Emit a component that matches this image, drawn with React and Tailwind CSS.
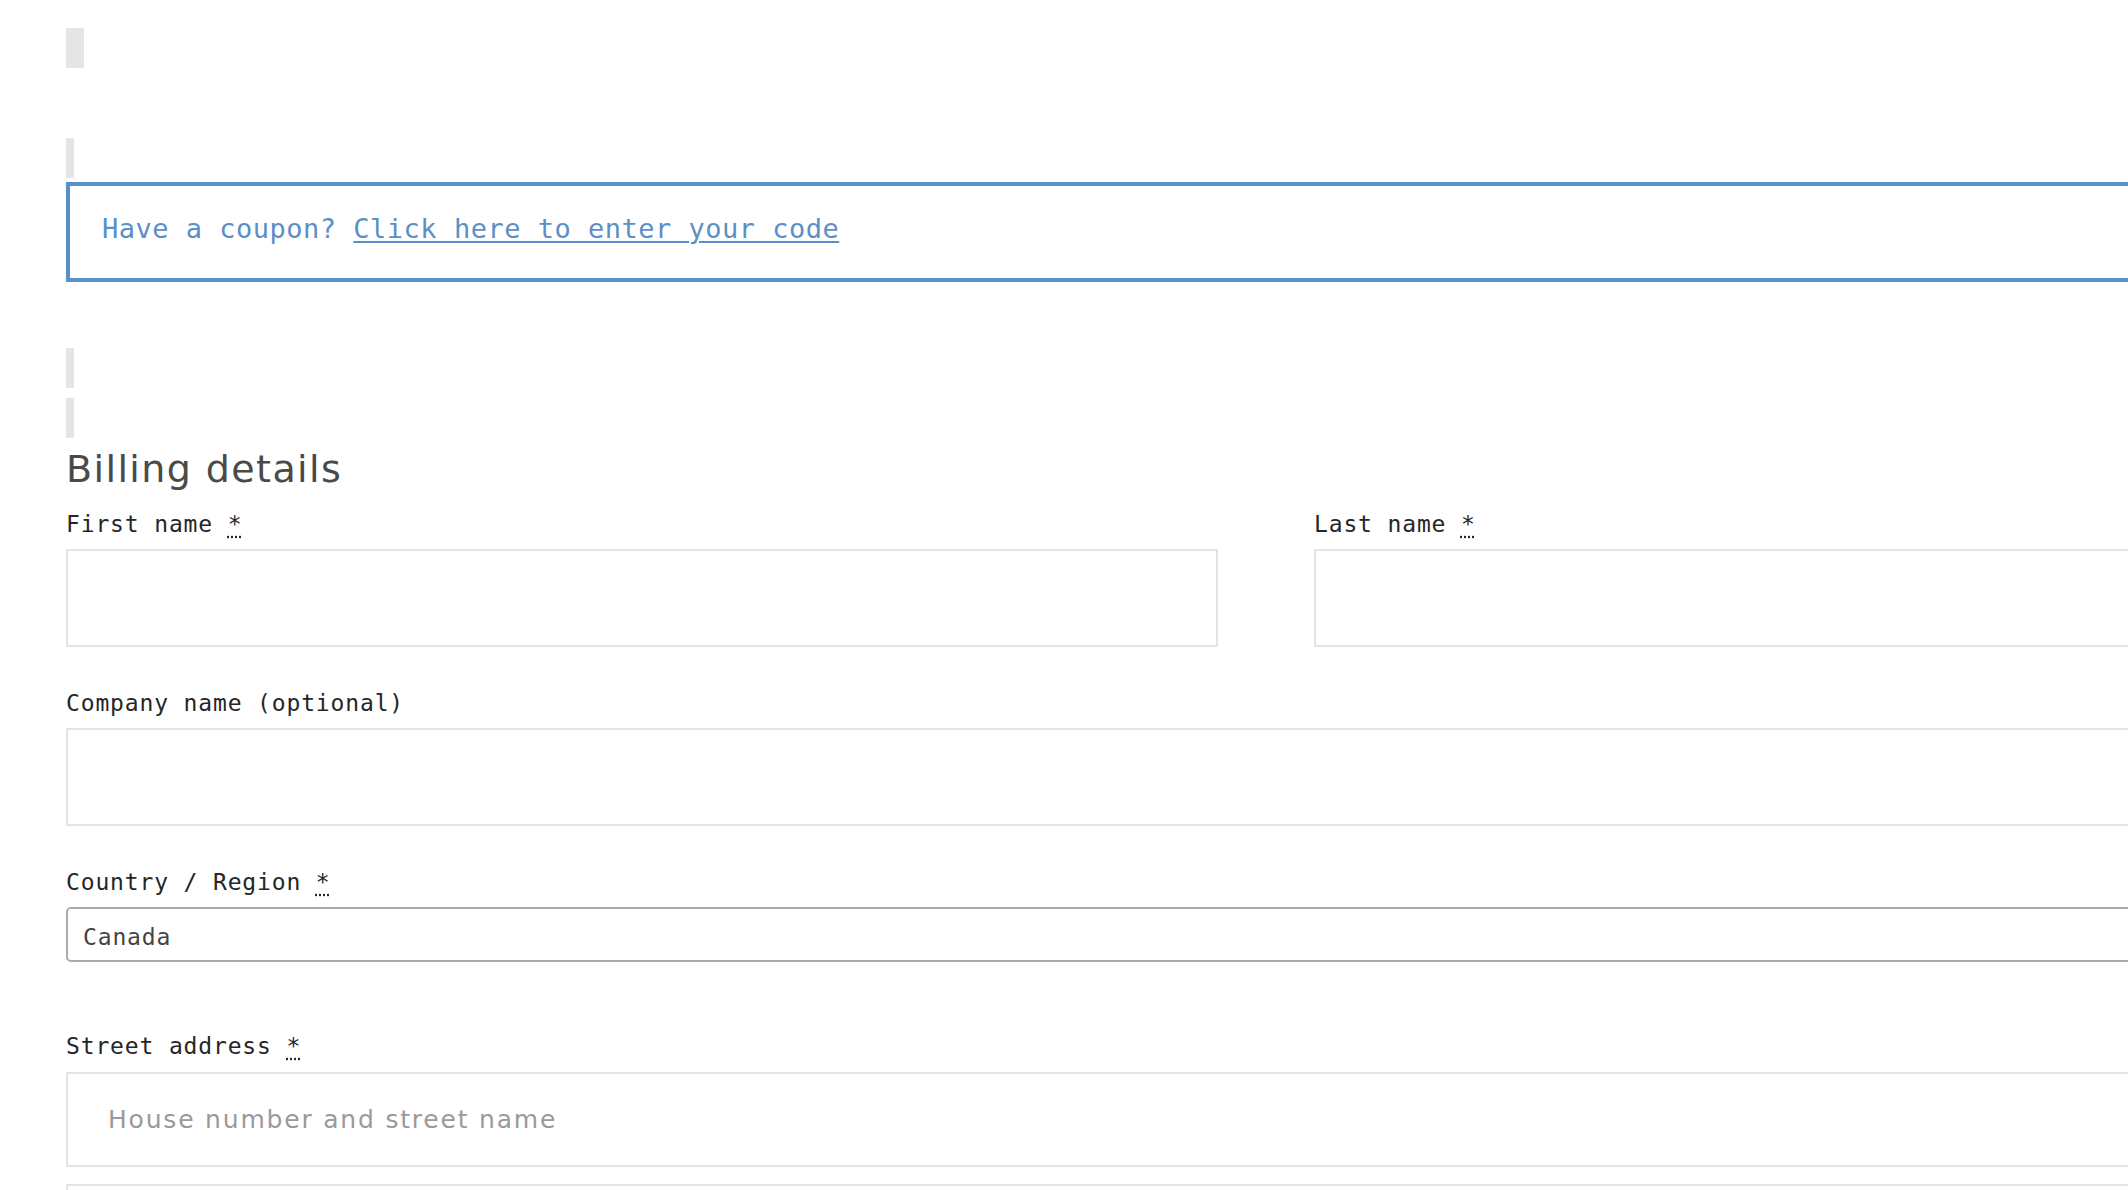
import React from 'react';

const mono = { fontFamily: '"DejaVu Sans Mono", "Liberation Mono", monospace' };
const sans = { fontFamily: '"DejaVu Sans", "Open Sans", sans-serif' };

const Required = () => (
  <abbr title="required" className="no-underline">
    <span className="underline decoration-dotted underline-offset-[4px]">*</span>
  </abbr>
);

const Label = ({ children, required, className = '' }) => (
  <label
    className={`block text-[23px] leading-[32px] tracking-[0.85px] text-[#262626] mb-[9px] ${className}`}
    style={mono}
  >
    {children} {required && <Required />}
  </label>
);

const TextInput = ({ placeholder, height = 'h-[98px]' }) => (
  <input
    type="text"
    placeholder={placeholder}
    className={`block w-full ${height} border-2 border-[#e4e4e4] bg-white px-[40px] text-[25px] tracking-[1.8px] text-[#444] placeholder:text-[#9a9a9a] outline-none`}
    style={sans}
  />
);

export default function App() {
  return (
    <div className="h-[1190px] w-full overflow-hidden bg-white">
      <div className="w-[2466px] pl-[66px] pt-[28px]">
        <div className="w-[2400px]">
          {/* empty notice wrappers */}
          <div className="h-[40px] w-[18px] bg-[#e5e5e5]" />
          <div className="mt-[70px] h-[40px] w-[8px] bg-[#e5e5e5]" />

          <div className="mt-[4px] flex h-[100px] items-center border-4 border-[#5b8fc7] pl-[32px] pb-[6px]">
            <p className="text-[27px] tracking-[0.5px] text-[#5b8fc7]" style={mono}>
              Have a coupon?{' '}
              <a href="#" className="underline decoration-2 underline-offset-[3px]">
                Click here to enter your code
              </a>
            </p>
          </div>

          <div className="mt-[66px] h-[40px] w-[8px] bg-[#e5e5e5]" />
          <div className="mt-[10px] h-[40px] w-[8px] bg-[#e5e5e5]" />

          <h3
            className="mt-[7px] text-[38px] leading-[48px] tracking-[1.4px] text-[#4a4a4a]"
            style={sans}
          >
            Billing details
          </h3>

          <div className="mt-[15px] grid grid-cols-2 gap-x-[96px]">
            <div>
              <Label required>First name</Label>
              <TextInput />
            </div>
            <div>
              <Label required>Last name</Label>
              <TextInput />
            </div>
          </div>

          <div className="mt-[40px]">
            <Label>Company name (optional)</Label>
            <TextInput />
          </div>

          <div className="mt-[40px]">
            <Label required>Country / Region</Label>
            <div
              className="flex h-[55px] items-center rounded-[5px] border-2 border-[#aaaaaa] pl-[15px] pt-[5px] text-[23px] tracking-[0.85px] text-[#444]"
              style={mono}
            >
              Canada
            </div>
          </div>

          <div className="mt-[68px]">
            <Label required className="mb-[10px]">Street address</Label>
            <TextInput placeholder="House number and street name" height="h-[95px]" />
            <div className="mt-[17px]">
              <TextInput height="h-[95px]" />
            </div>
          </div>
        </div>
      </div>
    </div>
  );
}
